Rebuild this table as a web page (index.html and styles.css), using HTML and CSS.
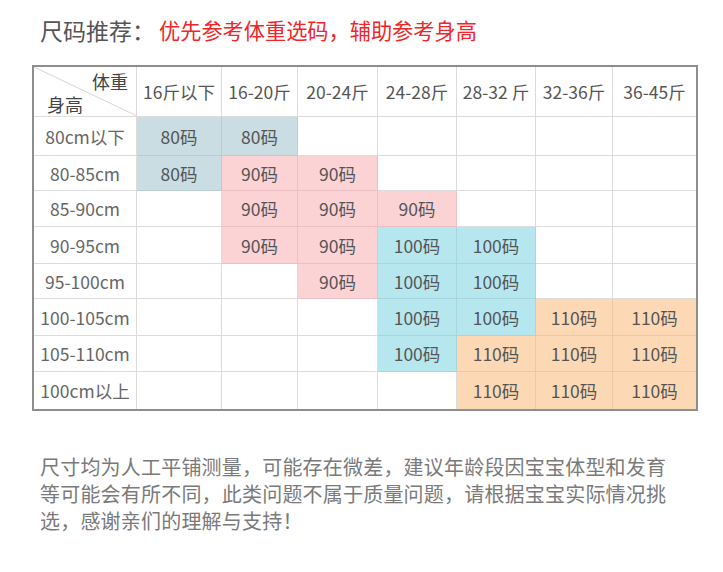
FILE: index.html
```html
<!DOCTYPE html>
<html lang="zh">
<head>
<meta charset="utf-8">
<link rel="stylesheet" href="styles.css">
</head>
<body>
<div class="page">
  <h1 class="title"><span class="title-lead">尺码推荐：</span><span class="title-red">优先参考体重选码，辅助参考身高</span></h1>
  <div class="chart">
    <div class="cell corner">
      <svg class="diag" viewBox="0 0 103 49" preserveAspectRatio="none"><line x1="0" y1="0" x2="103" y2="49" stroke="#d6d6d6" stroke-width="1"/></svg>
      <span class="corner-top">体重</span>
      <span class="corner-bottom">身高</span>
    </div>
    <div class="cell head">16斤以下</div>
    <div class="cell head">16-20斤</div>
    <div class="cell head">20-24斤</div>
    <div class="cell head">24-28斤</div>
    <div class="cell head">28-32 斤</div>
    <div class="cell head">32-36斤</div>
    <div class="cell head last">36-45斤</div>

    <div class="cell label">80cm以下</div>
    <div class="cell c-grey">80码</div>
    <div class="cell c-grey">80码</div>
    <div class="cell"></div>
    <div class="cell"></div>
    <div class="cell"></div>
    <div class="cell"></div>
    <div class="cell last"></div>

    <div class="cell label">80-85cm</div>
    <div class="cell c-grey">80码</div>
    <div class="cell c-pink">90码</div>
    <div class="cell c-pink">90码</div>
    <div class="cell"></div>
    <div class="cell"></div>
    <div class="cell"></div>
    <div class="cell last"></div>

    <div class="cell label">85-90cm</div>
    <div class="cell"></div>
    <div class="cell c-pink">90码</div>
    <div class="cell c-pink">90码</div>
    <div class="cell c-pink">90码</div>
    <div class="cell"></div>
    <div class="cell"></div>
    <div class="cell last"></div>

    <div class="cell label">90-95cm</div>
    <div class="cell"></div>
    <div class="cell c-pink">90码</div>
    <div class="cell c-pink">90码</div>
    <div class="cell c-cyan">100码</div>
    <div class="cell c-cyan">100码</div>
    <div class="cell"></div>
    <div class="cell last"></div>

    <div class="cell label">95-100cm</div>
    <div class="cell"></div>
    <div class="cell"></div>
    <div class="cell c-pink">90码</div>
    <div class="cell c-cyan">100码</div>
    <div class="cell c-cyan">100码</div>
    <div class="cell"></div>
    <div class="cell last"></div>

    <div class="cell label">100-105cm</div>
    <div class="cell"></div>
    <div class="cell"></div>
    <div class="cell"></div>
    <div class="cell c-cyan">100码</div>
    <div class="cell c-cyan">100码</div>
    <div class="cell c-orange">110码</div>
    <div class="cell c-orange last">110码</div>

    <div class="cell label">105-110cm</div>
    <div class="cell"></div>
    <div class="cell"></div>
    <div class="cell"></div>
    <div class="cell c-cyan">100码</div>
    <div class="cell c-orange">110码</div>
    <div class="cell c-orange">110码</div>
    <div class="cell c-orange last">110码</div>

    <div class="cell label bottom">100cm以上</div>
    <div class="cell bottom"></div>
    <div class="cell bottom"></div>
    <div class="cell bottom"></div>
    <div class="cell bottom"></div>
    <div class="cell c-orange bottom">110码</div>
    <div class="cell c-orange bottom">110码</div>
    <div class="cell c-orange bottom last">110码</div>
  </div>
  <p class="note">尺寸均为人工平铺测量，可能存在微差，建议年龄段因宝宝体型和发育<br>等可能会有所不同，此类问题不属于质量问题，请根据宝宝实际情况挑<br>选，感谢亲们的理解与支持！</p>
</div>
</body>
</html>
```

FILE: styles.css
```css
html, body {
  margin: 0;
  padding: 0;
  background: #ffffff;
}

body {
  font-family: "Noto Sans CJK SC", "Noto Sans", sans-serif;
  color: #555555;
}

.page {
  width: 723px;
  height: 572px;
  overflow: hidden;
}

.title {
  margin: 14px 0 0 40px;
  height: 32px;
  line-height: 32px;
  font-weight: 400;
  white-space: nowrap;
  display: flex;
  align-items: center;
}

.title-lead {
  color: #555555;
  font-size: 23px;
}

.title-red {
  color: #f0262b;
  font-size: 21.2px;
  margin-left: 4px;
}

.chart {
  margin: 19px 0 0 32px;
  width: 662px;
  border: 2px solid #8e8e8e;
  display: grid;
  grid-template-columns: 103px 85px 76px 80px 79px 79px 77px 83px;
  grid-template-rows: 50px 39px 35px 36px 37px 35px 37px 36px 37px;
}

.cell {
  box-sizing: border-box;
  border-right: 1px solid #dcdcdc;
  border-bottom: 1px solid #dcdcdc;
  display: flex;
  align-items: center;
  justify-content: center;
  font-size: 17.5px;
  color: #555555;
  white-space: nowrap;
}

.cell.last {
  border-right: none;
}

.cell.bottom {
  border-bottom: none;
}

.head {
  color: #555555;
}

.label {
  color: #666666;
}

.c-grey {
  background: #c9dde2;
  border-color: #b9ccd1;
}

.c-pink {
  background: #fbd3d5;
  border-color: #ecc0c2;
}

.c-cyan {
  background: #b6e7ef;
  border-color: #a6d6de;
}

.c-orange {
  background: #fcd9b4;
  border-color: #ecc8a4;
}

.corner {
  position: relative;
  flex-direction: column;
  align-items: stretch;
  justify-content: flex-start;
  padding: 2px 8px 0 13px;
}

.diag {
  position: absolute;
  left: 0;
  top: 0;
  width: 103px;
  height: 49px;
}

.corner-top {
  align-self: flex-end;
  font-size: 18px;
  line-height: 24px;
  color: #444444;
}

.corner-bottom {
  align-self: flex-start;
  font-size: 18px;
  line-height: 22px;
  color: #444444;
}

.note {
  margin: 42px 0 0 40px;
  font-size: 20px;
  line-height: 27px;
  letter-spacing: 0.2px;
  color: #7a7a7a;
  white-space: nowrap;
}
```
